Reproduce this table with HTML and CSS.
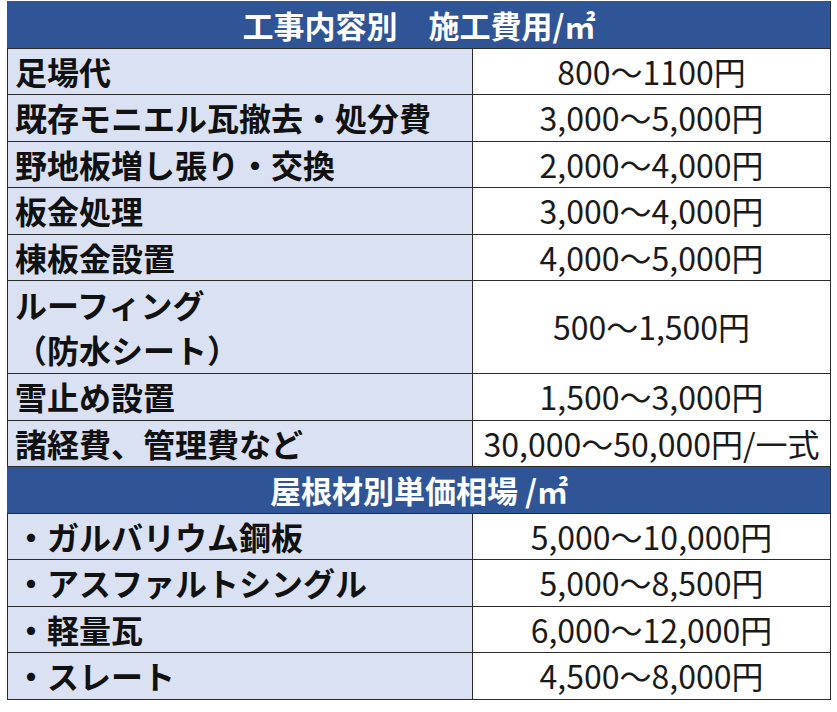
FILE: index.html
```html
<!DOCTYPE html>
<html lang="ja">
<head>
<meta charset="utf-8">
<link rel="stylesheet" href="styles.css">
</head>
<body>
<table class="cost">
  <colgroup><col class="c-item"><col class="c-price"></colgroup>
  <tr class="head"><th colspan="2">工事内容別　施工費用/㎡</th></tr>
  <tr><td class="item">足場代</td><td class="price">800～1100円</td></tr>
  <tr><td class="item">既存モニエル瓦撤去・処分費</td><td class="price">3,000～5,000円</td></tr>
  <tr><td class="item">野地板増し張り・交換</td><td class="price">2,000～4,000円</td></tr>
  <tr><td class="item">板金処理</td><td class="price">3,000～4,000円</td></tr>
  <tr><td class="item">棟板金設置</td><td class="price">4,000～5,000円</td></tr>
  <tr class="tall"><td class="item">ルーフィング<br>（防水シート）</td><td class="price">500～1,500円</td></tr>
  <tr><td class="item">雪止め設置</td><td class="price">1,500～3,000円</td></tr>
  <tr><td class="item">諸経費、管理費など</td><td class="price">30,000～50,000円/一式</td></tr>
  <tr class="head"><th colspan="2">屋根材別単価相場 /㎡</th></tr>
  <tr><td class="item">・ガルバリウム鋼板</td><td class="price">5,000～10,000円</td></tr>
  <tr><td class="item">・アスファルトシングル</td><td class="price">5,000～8,500円</td></tr>
  <tr><td class="item">・軽量瓦</td><td class="price">6,000～12,000円</td></tr>
  <tr><td class="item">・スレート</td><td class="price">4,500～8,000円</td></tr>
</table>
</body>
</html>
```

FILE: styles.css
```css
html, body {
  margin: 0;
  padding: 0;
  background: #ffffff;
}
body {
  padding: 1px 0 0 7px;
}
.cost {
  border-collapse: collapse;
  width: 823px;
  table-layout: fixed;
  font-family: "Noto Sans CJK JP", "Noto Sans", sans-serif;
}
.c-item {
  width: 465px;
}
.c-price {
  width: 358px;
}
.cost th, .cost td {
  border: 1px solid #2b2b2b;
  padding: 0;
  height: 46.5px;
  box-sizing: border-box;
  line-height: 1.1;
}
.head th {
  background: #2f5597;
  color: #ffffff;
  font-weight: 700;
  font-size: 31px;
  text-align: center;
  border-left: 1px solid #2f5597;
  border-right: 1px solid #2b2b2b;
}
.cost tr:first-child th {
  border-top: 1px solid #555;
}
.item {
  background: #d9e1f2;
  color: #111;
  font-weight: 700;
  font-size: 32px;
  padding-left: 7px !important;
  text-align: left;
  white-space: nowrap;
}
.price {
  background: #ffffff;
  color: #1a1a1a;
  font-weight: 400;
  font-size: 32px;
  text-align: center;
  white-space: nowrap;
}
.tall td {
  height: 93px;
}
.tall .item {
  line-height: 1.4;
}
```
